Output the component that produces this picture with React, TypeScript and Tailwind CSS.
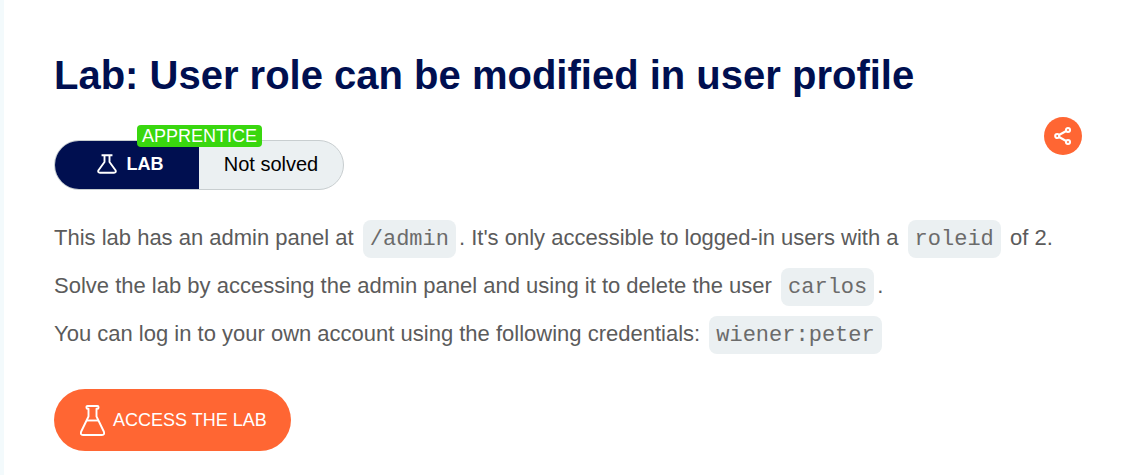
import React from "react";

function LabFlask() {
  return (
    <svg aria-hidden="true" viewBox="0 0 20 20" fill="none" stroke="currentColor" strokeWidth="1.9" strokeLinejoin="round" strokeLinecap="square" className="h-5 w-5">
      <path d="M5.5 1.2H14.5M7.5 1.2V8L1.5 16.2Q0.5 18.8 3 18.8H17Q19.5 18.8 18.5 16.2L12.5 8V1.2" />
    </svg>
  );
}

function LiquidFlask() {
  return (
    <svg aria-hidden="true" viewBox="0 0 25 31" fill="none" stroke="currentColor" strokeWidth="1.9" strokeLinejoin="round" className="h-[31px] w-[25px]">
      <path d="M7.5 1H17.5Q18.5 1 18.5 2V2.8Q18.5 3.8 17.5 3.8H16.5V11.5L23.8 26.5Q25 30 22 30H3Q0 30 1.2 26.5L8.5 11.5V3.8H7.5Q6.5 3.8 6.5 2.8V2Q6.5 1 7.5 1Z" />
      <path d="M6.8 15.5H18.2" />
    </svg>
  );
}

function ShareIcon() {
  return (
    <svg aria-hidden="true" viewBox="0 0 18 20" className="h-5 w-[18px]" fill="none" stroke="currentColor" strokeWidth="2.1">
      <circle cx="3.2" cy="10" r="2" />
      <circle cx="14" cy="4" r="2" />
      <circle cx="14" cy="16" r="2" />
      <path d="M5 9L12.2 5M5 11L12.2 15" />
    </svg>
  );
}

function Code({ children }: { children: React.ReactNode }) {
  return (
    <code className="mx-[3px] inline-block rounded-lg bg-[#ebf0f2] px-[7px] pt-0.5 align-middle font-['Liberation_Mono',monospace] text-[22px] leading-9 text-[#6b6b6b]">
      {children}
    </code>
  );
}

export default function App() {
  return (
    <main className="min-h-screen border-l-4 border-[#f3fafc] bg-white pt-[47px] pr-[54px] pb-6 pl-[50px] font-['Liberation_Sans',Arial,sans-serif] text-[#5b5b5b]">
      <h1 className="text-[40px] leading-[56px] font-bold text-[#000f50]">Lab: User role can be modified in user profile</h1>
      <div className="mt-3.5 flex items-start justify-between">
        <div className="relative mt-[23px] flex h-[50px] rounded-full border border-[#c8ced0] bg-[#ebf0f2] text-[20px] leading-6">
          <span className="flex w-36 items-center justify-center gap-2.5 rounded-l-full bg-[#000f50] pl-1.5 pb-0.5 text-[18px] font-bold text-white">
            <LabFlask />
            LAB
          </span>
          <span className="flex w-36 items-center justify-center pb-0.5 text-black">Not solved</span>
          <span className="absolute -top-4 left-[82px] rounded bg-[#39d70f] px-[5px] text-[18px] leading-[22px] text-white">APPRENTICE</span>
        </div>
        <button type="button" aria-label="Share" className="flex h-[38px] w-[38px] items-center justify-center rounded-full bg-[#ff6633] text-white">
          <ShareIcon />
        </button>
      </div>
      <div className="mt-6 text-[22px] leading-[48px]">
        <p>This lab has an admin panel at <Code>/admin</Code>. It's only accessible to logged-in users with a <Code>roleid</Code> of 2.</p>
        <p>Solve the lab by accessing the admin panel and using it to delete the user <Code>carlos</Code>.</p>
        <p>You can log in to your own account using the following credentials: <Code>wiener:peter</Code></p>
      </div>
      <a href="#lab" className="mt-[31px] inline-flex h-[62px] items-center gap-2 rounded-full bg-[#ff6633] pr-6 pl-[26px] text-[18px] text-white">
        <LiquidFlask />
        ACCESS THE LAB
      </a>
    </main>
  );
}
